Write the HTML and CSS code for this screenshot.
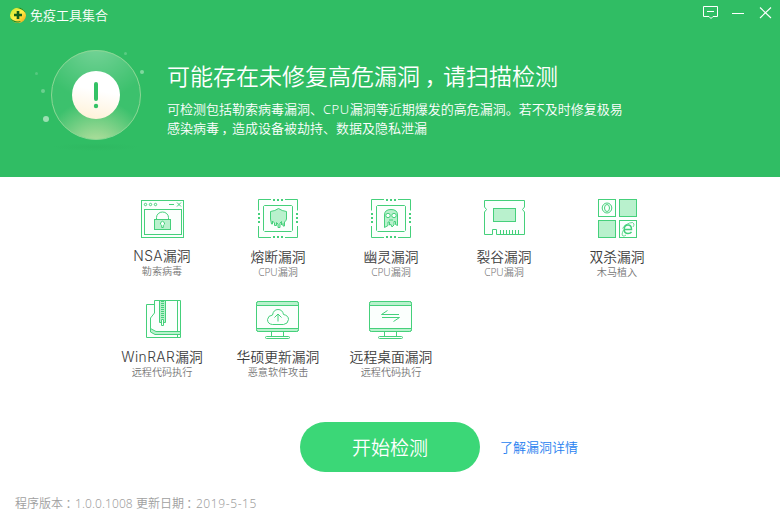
FILE: index.html
```html
<!DOCTYPE html>
<html lang="zh-CN">
<head>
<meta charset="utf-8">
<title>免疫工具集合</title>
<link rel="stylesheet" href="styles.css">
</head>
<body>
<div class="window">
  <header class="hero">
    <div class="titlebar">
      <svg class="logo" width="18" height="18" viewBox="0 0 18 18">
        <defs><linearGradient id="gold" x1="0" y1="0" x2="1" y2="1"><stop offset="0" stop-color="#c5e82c"/><stop offset=".5" stop-color="#fff04a"/><stop offset="1" stop-color="#f0a010"/></linearGradient></defs>
        <ellipse cx="9" cy="9.300" rx="8" ry="7.600" fill="url(#gold)"/>
        <path d="M8 2C11 1 15.500 3 16.500 7C14 3.500 11 2.500 8 2ZM1.500 12C4 15 8 16 12 15C9 18 3 16.500 1.500 12Z" fill="#168a28"/>
        <path d="M9 5V13M5 9H13" stroke="#11601d" stroke-width="2.600"/>
      </svg>
      <h1 class="app-name">免疫工具集合</h1>
      <svg class="controls" width="76" height="20" viewBox="0 0 76 20" fill="none" stroke="#fff">
        <path d="M3.500 3.500H17.500V13.500H13L11 15.500L9 13.500H3.500ZM7 8.500H14" stroke-width="1"/>
        <path d="M32 10.500H44" stroke-width="1"/>
        <path d="M60 4.500L71 15M71 4.500L60 15" stroke-width="1.100"/>
      </svg>
    </div>
    <div class="alert">
      <svg class="status" width="120" height="112" viewBox="0 0 120 112">
        <defs>
          <radialGradient id="glowTop" cx=".5" cy="-.1" r=".65"><stop offset="0" stop-color="#fff" stop-opacity=".36"/><stop offset="1" stop-color="#fff" stop-opacity=".06"/></radialGradient>
          <radialGradient id="glowBottom" cx=".5" cy="1.150" r=".6"><stop offset="0" stop-color="#fff2bc" stop-opacity=".75"/><stop offset="1" stop-color="#fff2bc" stop-opacity="0"/></radialGradient>
          <linearGradient id="disc" x1=".6" y1="0" x2=".4" y2="1"><stop offset=".4" stop-color="#fff"/><stop offset="1" stop-color="#fff2d9"/></linearGradient>
          <radialGradient id="shade"><stop offset="0" stop-color="#259c4d" stop-opacity=".14"/><stop offset="1" stop-color="#259c4d" stop-opacity="0"/></radialGradient>
        </defs>
        <ellipse cx="66" cy="107" rx="44" ry="4" fill="url(#shade)"/>
        <circle cx="66" cy="55" r="45" fill="url(#glowTop)"/>
        <circle cx="66" cy="55" r="44.500" fill="url(#glowBottom)" stroke="#8bd794" stroke-width="1"/>
        <circle cx="66" cy="55" r="24" fill="url(#disc)"/>
        <path d="M66 44V59" stroke="#34c265" stroke-width="4" stroke-linecap="round"/>
        <circle cx="66" cy="66" r="2.200" fill="#34c265"/>
        <g fill="#9be0b2"><circle cx="16" cy="79" r="3"/><circle cx="112" cy="32" r="2" opacity=".75"/><circle cx="13" cy="51" r="2" opacity=".55"/><circle cx="95.500" cy="13.500" r="1.500" opacity=".4"/><circle cx="6.500" cy="33.500" r="1.500" opacity=".35"/></g>
      </svg>
      <div class="message">
        <h2>可能存在未修复高危漏洞<span class="mid">，</span>请扫描检测</h2>
        <p>可检测包括勒索病毒漏洞、<span class="cpu">CPU</span>漏洞等近期爆发的高危漏洞。若不及时修复极易<br>感染病毒<span class="mid">，</span>造成设备被劫持、数据及隐私泄漏</p>
      </div>
    </div>
  </header>

  <svg class="defs" width="0" height="0">
    <symbol id="chip" viewBox="0 0 48 44">
      <rect x="9.500" y="9.500" width="29" height="26"/>
      <path d="M17 3.500H4.500V14.500M31 3.500H43.500V14.500M4.500 30V41.500H17M43.500 30V41.500H31"/>
      <path class="solid" d="M19 3h2v2h-2zM23 3h2v2h-2zM27 3h2v2h-2zM19 40h2v2h-2zM23 40h2v2h-2zM27 40h2v2h-2zM4 17h2v2h-2zM4 21h2v2h-2zM4 25h2v2h-2zM42 17h2v2h-2zM42 21h2v2h-2zM42 25h2v2h-2z"/>
    </symbol>
    <symbol id="monitor" viewBox="0 0 48 44">
      <rect x="2.500" y="5.500" width="42" height="30" rx="2"/>
      <path class="tint" d="M2.500 9.500V7.500Q2.500 5.500 4.500 5.500H42.500Q44.500 5.500 44.500 7.500V9.500ZM2.500 32.500H44.500V33.500Q44.500 35.500 42.500 35.500H4.500Q2.500 35.500 2.500 33.500Z"/>
      <path d="M17.500 36V40.500M29.500 36V40.500"/>
      <rect x="11.500" y="40.500" width="24" height="2" rx="1"/>
    </symbol>
  </svg>

  <main class="tools">
    <div class="tool raised">
      <svg class="icon" viewBox="0 0 48 44">
        <rect x="3.500" y="4.500" width="42" height="37"/><rect x="6.500" y="13.500" width="37" height="25"/>
        <circle cx="7.500" cy="8.500" r="1.200"/><circle cx="12.500" cy="8.500" r="1.200"/><circle cx="17.500" cy="8.500" r="1.200"/>
        <path d="M31 8.500H36M39 6.500L43 10.500M43 6.500L39 10.500"/>
        <path d="M18.500 23V21.500A6 5.500 0 0 1 30.500 21.500V23"/>
        <rect class="tint" x="16.500" y="23.500" width="16" height="10"/>
        <path d="M23.700 29.300A2 2 0 1 1 25.300 29.300V31.500H23.700Z"/>
      </svg>
      <h3><span class="latin">NSA</span>漏洞</h3><p>勒索病毒</p>
    </div>
    <div class="tool">
      <svg class="icon" viewBox="0 0 48 44"><use href="#chip"/>
        <path class="tint" d="M16.500 15.500Q21 15 24.500 12.500Q28 15 32.500 15.500V23Q32 25 30.500 26V30H29V27.500L27.500 29V25.500L26 27V31.500H24V28L22.500 26.500V29.500H20.500V27L18.500 25V28H17.500L16.500 23Z"/>
      </svg>
      <h3>熔断漏洞</h3><p>CPU漏洞</p>
    </div>
    <div class="tool">
      <svg class="icon" viewBox="0 0 48 44"><use href="#chip"/>
        <path class="tint" d="M17.500 31.500V19Q17.500 13.500 24 13.500Q30.500 13.500 30.500 19V29.500L28.500 28.500V25.500H27V29L25 31L24 28.500L22.500 29V26H21V29.500Z"/>
        <circle cx="21" cy="19.500" r="2.200"/><circle cx="27" cy="19.500" r="2.200"/><path d="M22 24H26"/>
      </svg>
      <h3>幽灵漏洞</h3><p>CPU漏洞</p>
    </div>
    <div class="tool">
      <svg class="icon" viewBox="0 0 48 44">
        <path d="M4.500 4.500H44.500V11L42.500 13.500L44.500 16V38.500H16.500V33.500H12.500V38.500H4.500V16L6.500 13.500L4.500 11Z"/>
        <rect class="tint" x="13.500" y="12.500" width="22" height="13"/>
        <path d="M20.500 34V38M23.500 34V38M26.500 34V38M29.500 34V38M32.500 34V38M35.500 34V38M38.500 34V38"/>
      </svg>
      <h3>裂谷漏洞</h3><p>CPU漏洞</p>
    </div>
    <div class="tool lowered">
      <svg class="icon" viewBox="0 0 48 44">
        <rect x="5.500" y="3.500" width="17" height="17"/><rect class="tint" x="26.500" y="3.500" width="17" height="17"/>
        <rect class="tint" x="5.500" y="24.500" width="17" height="17"/><rect x="26.500" y="24.500" width="17" height="17"/>
        <ellipse cx="14" cy="12" rx="4.800" ry="5"/><ellipse cx="14" cy="12" rx="2.500" ry="3.500"/>
        <path d="M31.500 33.500H38.500Q38.500 29 35 29Q31.200 29 31.200 33.500Q31.200 37.500 35 37.500Q37.500 37.500 38.500 35.800" stroke-width="1.500"/>
        <path d="M29.500 32.500Q31.500 28.500 36.500 27Q40.500 25.500 41 28Q41 29.500 40 31M30.500 34Q28 39 30 40Q31.500 40.200 33 39" stroke-width=".8" fill="none"/>
      </svg>
      <h3>双杀漏洞</h3><p>木马植入</p>
    </div>
    <div class="tool">
      <svg class="icon" viewBox="0 0 48 44">
        <path d="M17 8.500H8.500V41.500H42.500V4.500H16.500V17L12.500 22V34"/>
        <path class="tint" d="M12.500 32.500V36L17 38.500H42.500V35.500H18Z"/>
        <path d="M39.500 5V35M39.500 39V41"/>
        <path class="tint" d="M21.500 4.500H27.500V26.500H21.500Z"/>
        <path d="M24.500 5V23" stroke-width="3" stroke-dasharray="1 1"/>
        <path d="M23.500 23.500H25.500V29.500H23.500Z"/>
      </svg>
      <h3><span class="latin">WinRAR</span>漏洞</h3><p>远程代码执行</p>
    </div>
    <div class="tool">
      <svg class="icon" viewBox="0 0 48 44"><use href="#monitor"/>
        <path d="M18.500 28.500Q13.500 28 13.500 23.500Q14 19.500 18.500 19Q19.500 13.500 24 13.500Q28.500 13.500 29.500 18.500Q34.500 19.500 34.500 23.500Q34 28 29.500 28.500ZM24 25.500V18.500M20.500 21.500L24 18L27.500 21.500"/>
      </svg>
      <h3>华硕更新漏洞</h3><p>恶意软件攻击</p>
    </div>
    <div class="tool">
      <svg class="icon" viewBox="0 0 48 44"><use href="#monitor"/>
        <path d="M32 18.500H14.500L20.500 14.500M15 21.500H32.500L26.500 25.500"/>
      </svg>
      <h3>远程桌面漏洞</h3><p>远程代码执行</p>
    </div>
  </main>

  <div class="actions">
    <button class="scan" type="button">开始检测</button>
    <a class="details">了解漏洞详情</a>
  </div>
  <footer class="version">程序版本<span class="mid">：</span><span class="number">1.0.0.1008</span> 更新日期<span class="mid">：</span><span class="date">2019-5-15</span></footer>
</div>
</body>
</html>
```

FILE: styles.css
```css
* { box-sizing: border-box; }
body, h1, h2, h3, p { margin: 0; font-weight: 350; }
body { font-family: "Noto Sans", "Noto Sans CJK SC", sans-serif; background: #fff; }
.window { width: 780px; height: 520px; overflow: hidden; display: flex; flex-direction: column; }
.mid { padding-left: .2em; margin-right: -.2em; }
.hero { height: 177px; background: #30bd64; color: #fff; flex: none; }
.titlebar { display: flex; height: 30px; padding: 0 4px 0 9px; align-items: center; }
.logo { margin-right: 3px; }
.app-name { font-size: 13px; line-height: 20px; }
.controls { margin: -4px 0 0 auto; }
.alert { display: flex; padding: 10px 0 0 30px; }
.status { flex: none; margin-right: 17px; }
.message { padding-top: 19px; white-space: nowrap; }
.message h2 { font-size: 23px; line-height: 34px; }
.message p { margin-top: 7px; font-size: 13px; line-height: 19px; }
.cpu { letter-spacing: .5px; }
.defs { display: block; position: absolute; }

.tools { display: grid; grid-template-columns: 116px 116px 110px 116px 110px; grid-auto-rows: 100px; padding: 19px 0 0 104px; height: 245px; flex: none; }
.tool { text-align: center; white-space: nowrap; }
.icon { display: block; width: 48px; height: 44px; margin: 0 auto; fill: #fbfffd; stroke: #45d07b; stroke-width: 1; }
.tint { fill: #b9f1cd; }
.solid { fill: #45d07b; stroke: none; }
.tool h3 { font-family: "Inter", "Noto Sans CJK SC", sans-serif; font-size: 13.8px; line-height: 16px; margin-top: 9px; color: #3c3c3c; }
.tool p { font-size: 10.1px; line-height: 13px; margin-top: 1px; color: #777; }
.latin { letter-spacing: .4px; }
.raised h3 { margin-top: 8px; margin-bottom: 1px; }

.actions { display: flex; align-items: center; gap: 20px; padding-left: 300px; height: 50px; }
.scan { width: 180px; height: 50px; border: 0; border-radius: 25px; background: #3bd777; color: #fff; font: 350 19px "Noto Sans CJK SC", sans-serif; padding: 0 0 2px; }
.details { font-size: 13px; color: #277ff0; padding-bottom: 2px; }
.version { margin-top: 23px; padding-left: 15px; font-size: 12px; line-height: 18px; color: #a0a0a0; }
.number { letter-spacing: .1px; }
.date { letter-spacing: .6px; }
```
